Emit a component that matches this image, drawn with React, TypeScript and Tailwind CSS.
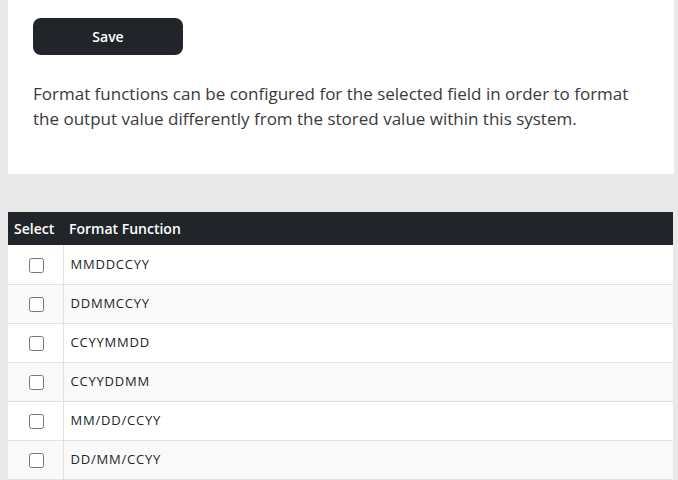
const formats = ["MMDDCCYY", "DDMMCCYY", "CCYYMMDD", "CCYYDDMM", "MM/DD/CCYY", "DD/MM/CCYY"]

export default function App() {
  return (
    <div className="min-h-screen bg-[#e9e9e9] px-2 text-[#212529]" style={{ fontFamily: "'Open Sans', sans-serif" }}>
      <div className="bg-white pl-[25px] pr-6 pt-[18px] pb-[43px] w-[666px]">
        <button className="w-[150px] h-[37px] rounded-lg bg-[#212529] text-white text-sm font-semibold">Save</button>
        <p className="mt-[26px] text-[17px] leading-[25px] text-[#3a3a3a]">
          Format functions can be configured for the selected field in order to format the output value differently from the stored value within this system.
        </p>
      </div>
      <div className="mt-[38px] w-[665px]">
        <table className="w-full border-collapse text-sm">
          <thead>
            <tr className="bg-[#212529] text-white h-[33px]">
              <th className="w-[55px] px-[6px] text-left font-semibold">Select</th>
              <th className="px-[6px] text-left font-semibold">Format Function</th>
            </tr>
          </thead>
          <tbody>
            {formats.map((f, i) => (
              <tr key={f} className={(i % 2 ? "bg-[#f9f9f9]" : "bg-white") + " h-[39px] border-b border-[#dee2e6]"}>
                <td className="border-r border-[#dee2e6] text-center">
                  <input type="checkbox" className="w-[15px] h-[15px] align-middle ml-[2px]" />
                </td>
                <td className="px-[7px] text-[13px] tracking-[0.06em]">{f}</td>
              </tr>
            ))}
          </tbody>
        </table>
      </div>
    </div>
  )
}
